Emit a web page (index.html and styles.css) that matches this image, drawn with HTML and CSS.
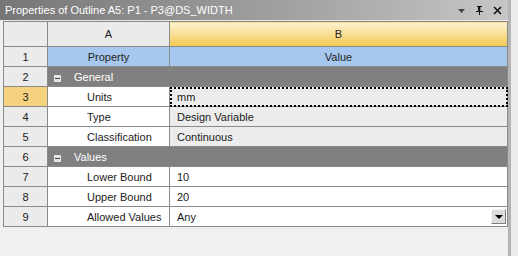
FILE: index.html
```html
<!DOCTYPE html>
<html lang="en">
<head>
    <link rel="stylesheet" href="styles.css">
</head>
<body>
    <div class="window">
        <div class="panel">
            <div class="titlebar">
                <span class="title">Properties of Outline A5: P1 - P3@DS_WIDTH</span>
                <span class="tools">
                    <svg width="9" height="9" viewBox="0 0 9 9"><path d="M1 3h7L4.5 7z" fill="#444"/></svg>
                    <svg width="9" height="11" viewBox="0 0 9 11"><path d="M2 1h5v1H6v4h2v1H5v3H4V7H1V6h2V2H2z" fill="#111"/><path d="M5 2h1v4H5z" fill="#888"/></svg>
                    <svg width="9" height="9" viewBox="0 0 9 9"><path d="M1 1l7 7M8 1L1 8" stroke="#111" stroke-width="1.6"/></svg>
                </span>
            </div>
            <div class="grid-wrap">
                <table class="grid">
                    <colgroup>
                        <col class="c-num">
                        <col class="c-a">
                        <col class="c-b">
                    </colgroup>
                    <tr class="head">
                        <td class="num"></td>
                        <td class="colhead">A</td>
                        <td class="colhead active">B</td>
                    </tr>
                    <tr class="caption">
                        <td class="num">1</td>
                        <td>Property</td>
                        <td>Value</td>
                    </tr>
                    <tr class="section">
                        <td class="num">2</td>
                        <td colspan="2"><span class="minus"></span>General</td>
                    </tr>
                    <tr>
                        <td class="num current">3</td>
                        <td class="prop">Units</td>
                        <td class="val ro focus">mm</td>
                    </tr>
                    <tr>
                        <td class="num">4</td>
                        <td class="prop">Type</td>
                        <td class="val ro">Design Variable</td>
                    </tr>
                    <tr>
                        <td class="num">5</td>
                        <td class="prop">Classification</td>
                        <td class="val ro">Continuous</td>
                    </tr>
                    <tr class="section">
                        <td class="num">6</td>
                        <td colspan="2"><span class="minus"></span>Values</td>
                    </tr>
                    <tr>
                        <td class="num">7</td>
                        <td class="prop">Lower Bound</td>
                        <td class="val">10</td>
                    </tr>
                    <tr>
                        <td class="num">8</td>
                        <td class="prop">Upper Bound</td>
                        <td class="val">20</td>
                    </tr>
                    <tr>
                        <td class="num">9</td>
                        <td class="prop">Allowed Values</td>
                        <td class="val combo">Any<span class="drop"></span></td>
                    </tr>
                </table>
            </div>
        </div>
        <div class="edge"></div>
    </div>
</body>
</html>
```

FILE: styles.css
```css
body
{
    margin: 0;
    background: #f0f0f0;
    font-family: "Liberation Sans", Arial, sans-serif;
    font-size: 11px;
    color: #222;
}
.window
{
    display: flex;
    height: 256px;
}
.panel
{
    width: 508px;
}
.edge
{
    flex: 1;
    border-left: 3px solid #b4b4b4;
    background: #ececec;
}
.titlebar
{
    height: 20px;
    display: flex;
    align-items: center;
    justify-content: space-between;
    padding: 0 6px 0 5px;
    background: linear-gradient(to right, #767676, #a4a4a4 60%, #c6c6c6);
    border-bottom: 1px solid #e6e6e6;
}
.title
{
    color: #fff;
    font-size: 11px;
}
.tools
{
    display: flex;
    align-items: center;
    gap: 9px;
}
.grid-wrap
{
    padding: 0 2px 0 3px;
}
.grid
{
    border-collapse: collapse;
    table-layout: fixed;
    width: 504px;
}
.c-num { width: 44px; }
.c-a { width: 122px; }
.c-b { width: 338px; }
.grid td
{
    border: 1px solid #8a8a8a;
    height: 19px;
    padding: 0;
    white-space: nowrap;
}
.head td
{
    height: 24px;
    text-align: center;
    background: #ebebeb;
}
.head .active
{
    background: linear-gradient(#fdf3d2, #f8dc8c 55%, #f4c84e);
}
.num
{
    text-align: center;
    background: #ebebeb;
}
.num.current
{
    background: #f5d37e;
}
.caption td
{
    text-align: center;
    background: #a6c8ee;
}
.caption td.num
{
    background: #ebebeb;
}
.section td
{
    background: #808080;
    color: #fff;
}
.section td.num
{
    background: #ebebeb;
    color: #222;
}
.minus
{
    display: inline-block;
    width: 7px;
    height: 7px;
    margin: 0 13px 0 6px;
    background: #e4e4e4;
    position: relative;
    vertical-align: -1px;
}
.minus::after
{
    content: "";
    position: absolute;
    left: 1px;
    top: 3px;
    width: 5px;
    height: 1px;
    background: #404040;
}
.prop
{
    padding-left: 39px !important;
    background: #fff;
}
.val
{
    padding-left: 7px !important;
    background: #fff;
}
.val.ro
{
    background: #ececec;
}
.val.focus
{
    outline: 2px dotted #000;
    outline-offset: -2px;
}
.combo
{
    position: relative;
}
.drop
{
    position: absolute;
    right: 1px;
    top: 2px;
    width: 15px;
    height: 15px;
    background: #dcdcdc;
    border-top: 1px solid #f4f4f4;
    border-left: 1px solid #f4f4f4;
    border-right: 1px solid #808080;
    border-bottom: 1px solid #808080;
    box-sizing: border-box;
}
.drop::after
{
    content: "";
    position: absolute;
    left: 3px;
    top: 5px;
    border-left: 4px solid transparent;
    border-right: 4px solid transparent;
    border-top: 4px solid #000;
}
```
